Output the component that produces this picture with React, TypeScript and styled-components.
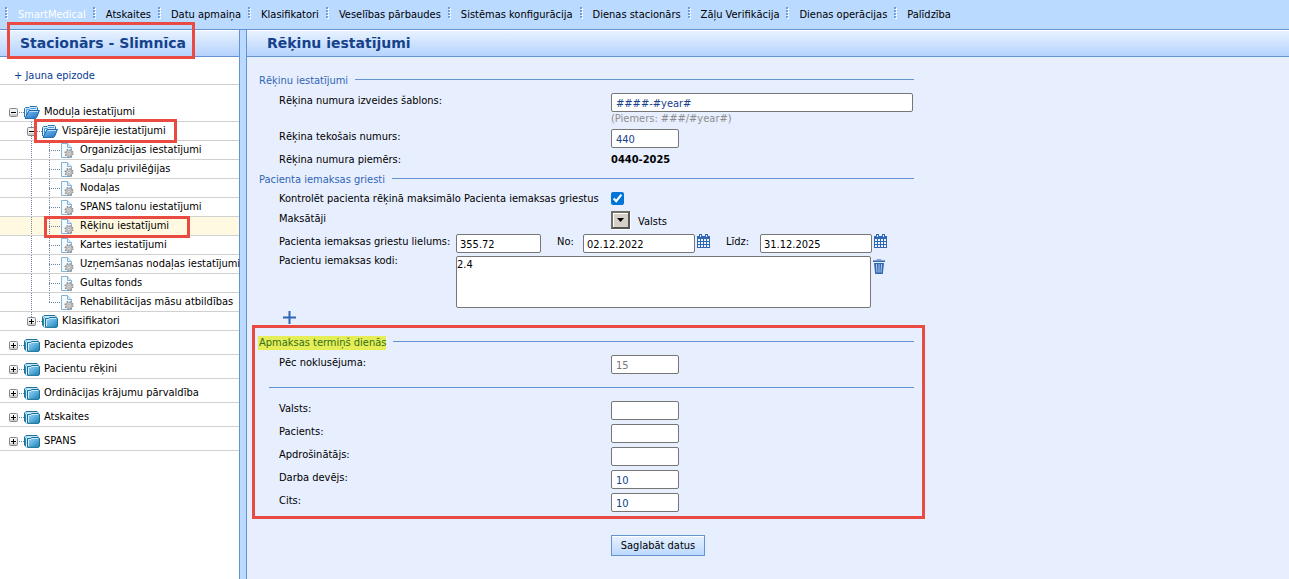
import React, { useState } from 'react';
import styled, { createGlobalStyle, css } from 'styled-components';

const c = {
  bar: '#bbdaff',
  line: '#6593cf',
  panel: '#e7eefe',
  ink: '#15428b',
  legend: '#2f66b5',
  rule: '#d0d0d0',
  mark: '#e94b43',
};

const dots = (color: string) =>
  `repeating-linear-gradient(to bottom, ${color} 0 1px, transparent 1px 2px)`;
const dotsAcross = (color: string) =>
  `repeating-linear-gradient(to right, ${color} 0 1px, transparent 1px 2px)`;

const GlobalStyle = createGlobalStyle`
  *, *::before, *::after { box-sizing: border-box; }
  body {
    margin: 0;
    background: ${c.panel};
    color: #000;
    font: 11px/14px "DejaVu Sans Condensed", Tahoma, sans-serif;
  }
  input, textarea, button { font: inherit; color: inherit; margin: 0; }
  a { color: inherit; text-decoration: none; }
`;

const Page = styled.div`
  display: flex;
  flex-direction: column;
  min-height: 100vh;
`;

const TopBar = styled.nav`
  background: ${c.bar};
  border-bottom: 1px solid ${c.line};
  padding: 7px 5px;
`;

const Menu = styled.ul`
  display: flex;
  list-style: none;
  margin: 0;
  padding: 0;
`;

const MenuItem = styled.li<{ $active?: boolean }>`
  display: flex;
  gap: 10px;
  margin-right: 7px;
  white-space: nowrap;
  color: ${(p) => (p.$active ? '#fff' : '#000')};
  a { padding-top: 1px; }
`;

const Grip = styled.svg`
  flex: none;
`;

const Columns = styled.div`
  display: flex;
  flex: 1;
`;

const Sidebar = styled.aside`
  flex: none;
  width: 240px;
  background: #fff;
  border-right: 1px solid ${c.line};
`;

const Splitter = styled.div`
  flex: none;
  width: 7px;
  background: ${c.bar};
  border-right: 1px solid ${c.line};
`;

const Main = styled.main`
  flex: 1;
  min-width: 0;
`;

const TitleBar = styled.header`
  position: relative;
  height: 27px;
  padding: 0 20px;
  border-top: 1px solid #fff;
  border-bottom: 1px solid ${c.line};
  background: linear-gradient(#e8f2ff, #b5d3fd);
`;

const Title = styled.h1`
  margin: 0;
  color: ${c.ink};
  font-family: "DejaVu Sans", Verdana, sans-serif;
  font-size: 14px;
  line-height: 25px;
  font-weight: bold;
  white-space: nowrap;
`;

const Callout = styled.span<{ $x: number; $y: number; $w: number; $h: number }>`
  position: absolute;
  z-index: 2;
  left: ${(p) => p.$x}px;
  top: ${(p) => p.$y}px;
  width: ${(p) => p.$w}px;
  height: ${(p) => p.$h}px;
  border: 3px solid ${c.mark};
  pointer-events: none;
`;

const NewEpisode = styled.a`
  display: block;
  padding: 12px 14px 1px;
  border-bottom: 1px solid ${c.rule};
  color: #0a3a94;
`;

const Tree = styled.ul`
  list-style: none;
  margin: 0;
  padding: 13px 0 0;
`;

const TreeRow = styled.li<{ $level: number; $selected?: boolean }>`
  position: relative;
  display: flex;
  align-items: center;
  height: ${(p) => (p.$level === 0 ? 24 : 19)}px;
  padding-top: ${(p) => (p.$level === 0 ? 5 : 0)}px;
  padding-left: ${(p) => (p.$level === 0 ? 9 : 27)}px;
  border-bottom: 1px solid ${c.rule};
  background: ${(p) => (p.$selected ? '#fff9e1' : '#fff')};
  white-space: nowrap;
`;

const Guide = styled.span`
  align-self: stretch;
  flex: none;
  width: 18px;
  background: ${dots('#6f83a3')} 4px 0 / 1px 100% no-repeat;
`;

const Branch = styled.span<{ $last?: boolean }>`
  align-self: stretch;
  flex: none;
  width: 15px;
  background:
    ${dots('#6f83a3')} 4px 0 / 1px ${(p) => (p.$last ? '50%' : '100%')} no-repeat,
    ${dotsAcross('#6f83a3')} 4px 9px / 11px 1px no-repeat;
`;

const ToggleCell = styled.span<{ $guided?: boolean; $open?: boolean }>`
  align-self: stretch;
  display: flex;
  align-items: center;
  flex: none;
  padding-top: 1px;
  ${(p) =>
    p.$guided &&
    css`
      background: ${dots('#6f83a3')} 4px 0 / 1px ${p.$open ? '100%' : '50%'} no-repeat;
    `}
`;

const ToggleButton = styled.button`
  display: block;
  width: 9px;
  height: 9px;
  padding: 0;
  border: 0;
  background: none;
  svg { display: block; }
`;

const Dash = styled.span`
  flex: none;
  width: 6px;
  height: 1px;
  margin-top: 1px;
  background: ${dotsAcross('#6f83a3')} 1px 0;
`;

const TreeLink = styled.a<{ $gap: number }>`
  display: flex;
  align-items: center;
  gap: ${(p) => p.$gap}px;
`;

const Form = styled.form`
  max-width: 667px;
  padding: 15px 0 23px 12px;
`;

const Section = styled.section<{ $top?: number }>`
  position: relative;
  padding-top: ${(p) => p.$top ?? 0}px;
`;

const Legend = styled.h2`
  display: flex;
  align-items: center;
  gap: 7px;
  height: 16px;
  margin: 0 0 3px;
  padding-top: 1px;
  color: ${c.legend};
  font-size: 11px;
  line-height: 14px;
  font-weight: normal;
  &::after {
    content: '';
    flex: 1;
    height: 1px;
    margin-bottom: 2px;
    background: ${c.line};
  }
`;

const Marked = styled.mark`
  margin-left: -1px;
  padding: 0 0 0 1px;
  background: #e5ee56;
  color: #33701f;
`;

const Row = styled.div<{ $tight?: boolean }>`
  display: flex;
  align-items: flex-start;
  min-height: 19px;
  padding: ${(p) => (p.$tight ? 1 : 2)}px 0 2px 20px;
`;

const Label = styled.label<{ $w?: number }>`
  flex: none;
  width: ${(p) => p.$w ?? 332}px;
  padding-top: 1px;
  white-space: nowrap;
`;

const Field = styled.div`
  display: flex;
  flex-direction: column;
`;

const TextBox = styled.input<{ $w: number; $dark?: boolean }>`
  width: ${(p) => p.$w}px;
  height: 19px;
  padding: 2px ${(p) => (p.$dark ? 3 : 4)}px 0;
  border: 1px solid #767676;
  border-radius: 2px;
  background: #fff;
  color: ${(p) => (p.$dark ? '#000' : c.ink)};
  &:disabled { color: #777; }
`;

const Hint = styled.small`
  font-size: 11px;
  line-height: 13px;
  color: #8e8e8e;
`;

const Sample = styled.output`
  padding-top: 1px;
  font-weight: bold;
`;

const Check = styled.input`
  width: 13px;
  height: 13px;
  margin-top: 1px;
  accent-color: #0075d7;
`;

const PayerRow = styled(Row)`
  padding-bottom: 3px;
`;

const DropButton = styled.button`
  display: flex;
  align-items: center;
  justify-content: center;
  width: 19px;
  height: 18px;
  padding: 0;
  border: 2px solid #555;
  border-color: #716f64 #555 #555 #716f64;
  background: #d4d0c8;
  box-shadow: inset 1px 1px #fff, 1px 1px #fff;
`;

const PayerName = styled.span`
  padding: 4px 0 0 8px;
`;

const LimitRow = styled(Row)`
  padding-bottom: 0;
`;

const IconButton = styled.button`
  display: block;
  flex: none;
  padding: 0;
  border: 0;
  background: none;
  svg { display: block; }
`;

const DateField = styled.div`
  display: flex;
  align-items: flex-start;
  gap: 2px;
  margin-right: 16px;
`;

const CodesRow = styled(Row)`
  padding-top: 0;
  padding-bottom: 0;
`;

const Codes = styled.div`
  display: flex;
  align-items: flex-start;
  gap: 2px;
  padding-top: 3px;
  ${IconButton} { padding-top: 3px; }
`;

const CodesBox = styled.textarea`
  display: block;
  width: 415px;
  height: 52px;
  padding: 1px 0 0;
  border: 1px solid #767676;
  border-radius: 2px;
  background: #fff;
  resize: none;
`;

const AddRow = styled.div`
  padding: 3px 24px 0;
`;

const Divider = styled.hr`
  margin: 11px 0 11px 10px;
  border: 0;
  border-top: 1px solid ${c.line};
`;

const Actions = styled.div`
  padding: 21px 0 0 352px;
`;

const SaveButton = styled.button`
  min-width: 94px;
  height: 21px;
  padding: 1px 8px 0;
  border: 1px solid ${c.line};
  background: linear-gradient(#e8f2ff, #bcd9ff);
  box-shadow: inset 0 1px #fff;
  white-space: nowrap;
`;

function GripIcon() {
  return (
    <Grip width="3" height="12" aria-hidden="true">
      {[0, 3, 6, 9].map((y) => (
        <g key={y}>
          <rect x="1" y={y + 1} width="2" height="2" fill="#fff" />
          <rect x="0" y={y} width="2" height="2" fill="#6f9fe0" />
        </g>
      ))}
    </Grip>
  );
}

function ToggleIcon({ open }: { open: boolean }) {
  return (
    <svg width="9" height="9" aria-hidden="true">
      <rect x=".5" y=".5" width="8" height="8" rx="1" fill="#f3f1ec" stroke="#7f8896" />
      <path d="M1 6.5H8M1 7.5H8" stroke="#d3cec3" />
      <path d={open ? 'M2 4.5H7' : 'M2 4.5H7M4.5 2V7'} stroke="#000" />
    </svg>
  );
}

function FolderIcon({ open }: { open?: boolean }) {
  return (
    <svg width="16" height="13" viewBox="0 0 16 13" aria-hidden="true">
      <defs>
        <linearGradient id="folderFace" x1="0" y1="0" x2="1" y2="1">
          <stop offset="0" stopColor="#9ad6f8" />
          <stop offset=".5" stopColor="#5fb0e0" />
          <stop offset="1" stopColor="#1580ac" />
        </linearGradient>
        <linearGradient id="folderOpen" x1="0" y1="0" x2="1" y2="1">
          <stop offset="0" stopColor="#7cc0f2" />
          <stop offset="1" stopColor="#1f70c0" />
        </linearGradient>
      </defs>
      {open ? (
        <>
          <path d="M.5 11V2.6L1.6 1.5H5L6 .5H12.4L13.5 1.6V4" fill="#d3ebfb" stroke="#2572ad" />
          <path d="M2.5 9V3.5H5.4L6.4 2.5H12" fill="none" stroke="#4b9ad6" />
          <path d="M5 4.5H15.4L12.6 11.4L11.6 12.4H1Z" fill="url(#folderOpen)" stroke="#1d66a8" />
          <path d="M5.6 5.5H14" stroke="#b6dcf8" />
        </>
      ) : (
        <>
          <path d="M.5 10.5V2L2 .5H13L14 1.6" fill="#c7e8fa" stroke="#1b7199" />
          <path d="M2.5 12.4L1.5 11.4V3.6L2.6 2.5" fill="none" stroke="#2b86b0" />
          <path d="M3.5 12.4V3.5H6.4L7.4 2.5H14.6L15.5 3.4V11.4L14.5 12.4Z" fill="url(#folderFace)" stroke="#1b7199" />
          <path d="M4.5 11V4.5H7L8 3.5H14" fill="none" stroke="#c4e9fb" />
        </>
      )}
    </svg>
  );
}

function PageGearIcon() {
  return (
    <svg width="14" height="15" viewBox="0 0 14 15" aria-hidden="true">
      <path d="M1.5 .5H7.5L11.5 4.5V14.5H1.5Z" fill="#f3fafe" stroke="#86b2d4" />
      <path d="M7.5 .5V4.5H11.5" fill="#d9ecf8" stroke="#86b2d4" />
      <circle cx="9" cy="10.4" r="3.6" fill="none" stroke="#8c8c8c" strokeWidth="1.8" strokeDasharray="1.5 1.33" />
      <circle cx="9" cy="10.4" r="3" fill="#cfcfcf" stroke="#a3a3a3" strokeWidth=".8" />
      <circle cx="9" cy="10.4" r="1.1" fill="#fff" stroke="#8c8c8c" strokeWidth=".6" />
    </svg>
  );
}

function CalendarIcon() {
  return (
    <svg width="13" height="14" viewBox="0 0 13 14" aria-hidden="true">
      <path d="M0 2H13V14H0Z" fill="#2f66b5" />
      <path d="M2 0H5V3H2ZM8 0H11V3H8Z" fill="#2f66b5" />
      <path d="M3 1H4V3H3ZM9 1H10V3H9Z" fill="#e7eefe" />
      {[5, 8, 11].map((y) =>
        [1, 4, 7, 10].map((x) => <rect key={`${x}-${y}`} x={x} y={y} width="2" height="2" fill="#eef3ff" />),
      )}
    </svg>
  );
}

function TrashIcon() {
  return (
    <svg width="12" height="15" viewBox="0 0 12 15" aria-hidden="true">
      <path d="M4 1V.5H8V1" fill="none" stroke="#7f9fd3" />
      <path d="M0 1.5H12" stroke="#7f9fd3" />
      <path d="M0 2.5H12" stroke="#2f66b5" />
      <path d="M1 4H11L9.8 15H2.2Z" fill="#2f66b5" />
      <path d="M3.4 5L4 13.5M6 5V13.5M8.6 5L8 13.5" stroke="#b9cdee" />
    </svg>
  );
}

const menu = [
  'SmartMedical',
  'Atskaites',
  'Datu apmaiņa',
  'Klasifikatori',
  'Veselības pārbaudes',
  'Sistēmas konfigurācija',
  'Dienas stacionārs',
  'Zāļu Verifikācija',
  'Dienas operācijas',
  'Palīdzība',
];

type Box = { x: number; y: number; w: number; h: number };
type Node = { text: string; level: number; open?: boolean; last?: boolean; selected?: boolean; box?: Box };

const tree: Node[] = [
  { text: 'Moduļa iestatījumi', level: 0, open: true },
  { text: 'Vispārējie iestatījumi', level: 1, open: true, box: { x: 34, y: -3, w: 143, h: 24 } },
  { text: 'Organizācijas iestatījumi', level: 2 },
  { text: 'Sadaļu privilēģijas', level: 2 },
  { text: 'Nodaļas', level: 2 },
  { text: 'SPANS talonu iestatījumi', level: 2 },
  { text: 'Rēķinu iestatījumi', level: 2, selected: true, box: { x: 44, y: -1, w: 146, h: 22 } },
  { text: 'Kartes iestatījumi', level: 2 },
  { text: 'Uzņemšanas nodaļas iestatījumi', level: 2 },
  { text: 'Gultas fonds', level: 2 },
  { text: 'Rehabilitācijas māsu atbildības', level: 2, last: true },
  { text: 'Klasifikatori', level: 1 },
  { text: 'Pacienta epizodes', level: 0 },
  { text: 'Pacientu rēķini', level: 0 },
  { text: 'Ordinācijas krājumu pārvaldība', level: 0 },
  { text: 'Atskaites', level: 0 },
  { text: 'SPANS', level: 0 },
];

const terms = [
  { id: 'state', label: 'Valsts:', value: '' },
  { id: 'patient', label: 'Pacients:', value: '' },
  { id: 'insurer', label: 'Apdrošinātājs:', value: '' },
  { id: 'employer', label: 'Darba devējs:', value: '10' },
  { id: 'other', label: 'Cits:', value: '10' },
];

function TreeItem({ node }: { node: Node }) {
  const leaf = node.level === 2;
  return (
    <TreeRow $level={node.level} $selected={node.selected}>
      {leaf ? (
        <>
          <Guide />
          <Branch $last={node.last} />
        </>
      ) : (
        <>
          <ToggleCell $guided={node.level === 1} $open={node.open}>
            <ToggleButton type="button" aria-label={node.text} aria-expanded={!!node.open}>
              <ToggleIcon open={!!node.open} />
            </ToggleButton>
          </ToggleCell>
          <Dash />
        </>
      )}
      <TreeLink href="#" $gap={leaf ? 6 : 4}>
        {leaf ? <PageGearIcon /> : <FolderIcon open={node.open} />}
        {node.text}
      </TreeLink>
      {node.box && <Callout $x={node.box.x} $y={node.box.y} $w={node.box.w} $h={node.box.h} />}
    </TreeRow>
  );
}

export default function App() {
  const [control, setControl] = useState(true);
  return (
    <Page>
      <GlobalStyle />
      <TopBar>
        <Menu>
          {menu.map((text, i) => (
            <MenuItem key={text} $active={i === 0}>
              <GripIcon />
              <a href="#">{text}</a>
            </MenuItem>
          ))}
        </Menu>
      </TopBar>
      <Columns>
        <Sidebar>
          <TitleBar>
            <Title>Stacionārs - Slimnīca</Title>
            <Callout $x={7} $y={-9} $w={188} $h={37} />
          </TitleBar>
          <NewEpisode href="#">+ Jauna epizode</NewEpisode>
          <Tree>
            {tree.map((node) => (
              <TreeItem key={node.text} node={node} />
            ))}
          </Tree>
        </Sidebar>
        <Splitter />
        <Main>
          <TitleBar>
            <Title>Rēķinu iestatījumi</Title>
          </TitleBar>
          <Form onSubmit={(e) => e.preventDefault()}>
            <Section>
              <Legend>Rēķinu iestatījumi</Legend>
              <Row>
                <Label htmlFor="template">Rēķina numura izveides šablons:</Label>
                <Field>
                  <TextBox id="template" $w={302} defaultValue="####-#year#" />
                  <Hint>(Piemers: ###/#year#)</Hint>
                </Field>
              </Row>
              <Row>
                <Label htmlFor="current">Rēķina tekošais numurs:</Label>
                <TextBox id="current" $w={68} defaultValue="440" />
              </Row>
              <Row>
                <Label htmlFor="sample">Rēķina numura piemērs:</Label>
                <Sample id="sample">0440-2025</Sample>
              </Row>
            </Section>
            <Section $top={2}>
              <Legend>Pacienta iemaksas griesti</Legend>
              <Row $tight>
                <Label htmlFor="control">Kontrolēt pacienta rēķinā maksimālo Pacienta iemaksas griestus</Label>
                <Check
                  id="control"
                  type="checkbox"
                  checked={control}
                  onChange={(e) => setControl(e.target.checked)}
                />
              </Row>
              <PayerRow>
                <Label htmlFor="payers">Maksātāji</Label>
                <DropButton id="payers" type="button">
                  <svg width="7" height="4" aria-hidden="true">
                    <path d="M0 0H7L3.5 4Z" fill="#000" />
                  </svg>
                </DropButton>
                <PayerName>Valsts</PayerName>
              </PayerRow>
              <LimitRow>
                <Label htmlFor="limit" $w={177}>Pacienta iemaksas griestu lielums:</Label>
                <DateField>
                  <TextBox id="limit" $w={85} $dark defaultValue="355.72" />
                </DateField>
                <Label htmlFor="from" $w={26}>No:</Label>
                <DateField>
                  <TextBox id="from" $w={112} $dark defaultValue="02.12.2022" />
                  <IconButton type="button" aria-label="No">
                    <CalendarIcon />
                  </IconButton>
                </DateField>
                <Label htmlFor="to" $w={34}>Līdz:</Label>
                <DateField>
                  <TextBox id="to" $w={112} $dark defaultValue="31.12.2025" />
                  <IconButton type="button" aria-label="Līdz">
                    <CalendarIcon />
                  </IconButton>
                </DateField>
              </LimitRow>
              <CodesRow>
                <Label htmlFor="codes" $w={177}>Pacientu iemaksas kodi:</Label>
                <Codes>
                  <CodesBox id="codes" defaultValue="2.4" />
                  <IconButton type="button" aria-label="Dzēst">
                    <TrashIcon />
                  </IconButton>
                </Codes>
              </CodesRow>
              <AddRow>
                <IconButton type="button" aria-label="Pievienot">
                  <svg width="13" height="13" aria-hidden="true">
                    <path d="M0 6.5H13M6.5 0V13" stroke="#2f66b5" strokeWidth="2" />
                  </svg>
                </IconButton>
              </AddRow>
            </Section>
            <Section $top={10}>
              <Legend>
                <Marked>Apmaksas termiņš dienās</Marked>
              </Legend>
              <Row>
                <Label htmlFor="default">Pēc noklusējuma:</Label>
                <TextBox id="default" $w={68} defaultValue="15" disabled />
              </Row>
              <Divider />
              {terms.map((t) => (
                <Row key={t.id}>
                  <Label htmlFor={t.id}>{t.label}</Label>
                  <TextBox id={t.id} $w={68} defaultValue={t.value} />
                </Row>
              ))}
              <Callout $x={-7} $y={1} $w={673} $h={194} />
            </Section>
            <Actions>
              <SaveButton type="submit">Saglabāt datus</SaveButton>
            </Actions>
          </Form>
        </Main>
      </Columns>
    </Page>
  );
}
